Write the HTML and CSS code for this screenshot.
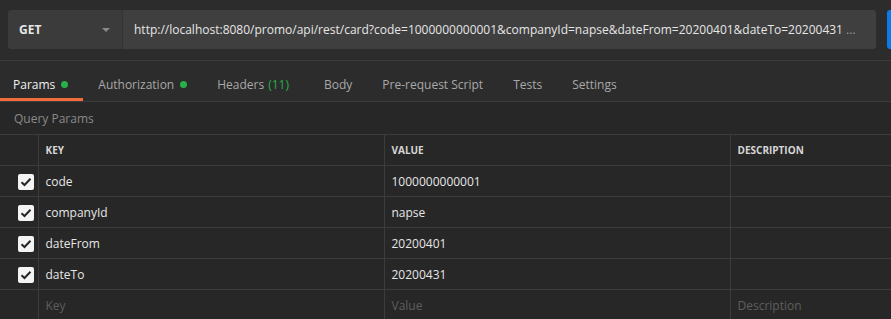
FILE: index.html
```html
<!DOCTYPE html>
<html lang="en">
<head>
    <meta charset="UTF-8">
    <title>Request</title>
    <link rel="stylesheet" href="styles.css">
</head>
<body>
    <div class="request-bar">
        <div class="method">
            <span>GET</span>
            <span class="caret"></span>
        </div>
        <div class="url">http://localhost:8080/promo/api/rest/card?code=1000000000001&amp;companyId=napse&amp;dateFrom=20200401&amp;dateTo=20200431 <span class="more">...</span></div>
        <button class="send" aria-label="Send"></button>
    </div>

    <div class="tabs">
        <div class="tab active">Params <span class="dot"></span></div>
        <div class="tab">Authorization <span class="dot"></span></div>
        <div class="tab headers">Headers <span class="count">(11)</span></div>
        <div class="tab">Body</div>
        <div class="tab">Pre-request Script</div>
        <div class="tab">Tests</div>
        <div class="tab">Settings</div>
    </div>

    <div class="params">
        <div class="section-title">Query Params</div>
        <table class="grid">
            <tr class="head">
                <th class="check-col"></th>
                <th class="key-col">KEY</th>
                <th class="value-col">VALUE</th>
                <th>DESCRIPTION</th>
            </tr>
            <tr>
                <td class="check-col"><span class="checkbox"><svg width="12" height="10" viewBox="0 0 12 10"><path d="M1.5 5.2 L4.5 8 L10.5 1.8" fill="none" stroke="#262626" stroke-width="2"/></svg></span></td>
                <td>code</td>
                <td>1000000000001</td>
                <td></td>
            </tr>
            <tr>
                <td class="check-col"><span class="checkbox"><svg width="12" height="10" viewBox="0 0 12 10"><path d="M1.5 5.2 L4.5 8 L10.5 1.8" fill="none" stroke="#262626" stroke-width="2"/></svg></span></td>
                <td>companyId</td>
                <td>napse</td>
                <td></td>
            </tr>
            <tr>
                <td class="check-col"><span class="checkbox"><svg width="12" height="10" viewBox="0 0 12 10"><path d="M1.5 5.2 L4.5 8 L10.5 1.8" fill="none" stroke="#262626" stroke-width="2"/></svg></span></td>
                <td>dateFrom</td>
                <td>20200401</td>
                <td></td>
            </tr>
            <tr>
                <td class="check-col"><span class="checkbox"><svg width="12" height="10" viewBox="0 0 12 10"><path d="M1.5 5.2 L4.5 8 L10.5 1.8" fill="none" stroke="#262626" stroke-width="2"/></svg></span></td>
                <td>dateTo</td>
                <td>20200431</td>
                <td></td>
            </tr>
            <tr class="placeholder">
                <td class="check-col"></td>
                <td>Key</td>
                <td>Value</td>
                <td>Description</td>
            </tr>
        </table>
    </div>
</body>
</html>
```

FILE: styles.css
```css
html, body {
    overflow: hidden;
}
body {
    margin: 0;
    width: 891px;
    height: 319px;
    background-color: #2c2c2c;
    font-family: 'Open Sans', sans-serif;
    font-size: 12px;
    color: #e6e6e6;
}
.request-bar {
    display: flex;
    height: 39px;
    padding: 10px 0 11px 8px;
    border-bottom: 1px solid #3c3c3c;
}
.method {
    width: 115px;
    box-sizing: border-box;
    display: flex;
    align-items: center;
    justify-content: space-between;
    padding: 0 12px 0 11px;
    background-color: #3b3b3b;
    border-radius: 3px 0 0 3px;
    border-right: 1px solid #333;
    font-weight: bold;
    color: #e6e6e6;
}
.caret {
    width: 0;
    height: 0;
    border-left: 4px solid transparent;
    border-right: 4px solid transparent;
    border-top: 4px solid #8a8a8a;
}
.url {
    width: 753px;
    box-sizing: border-box;
    display: flex;
    align-items: center;
    padding-left: 11px;
    background-color: #3f3f3f;
    border-radius: 0 3px 3px 0;
    white-space: pre;
    overflow: hidden;
    color: #e6e6e6;
}
.url .more {
    color: #9a9a9a;
}
.send {
    flex: 1;
    margin-left: 11px;
    padding: 0;
    border: none;
    border-radius: 3px 0 0 3px;
    background-color: #097bed;
}
.tabs {
    display: flex;
    height: 40px;
    border-bottom: 1px solid #3c3c3c;
}
.tab {
    height: 40px;
    box-sizing: border-box;
    display: flex;
    align-items: center;
    padding: 9px 15px 0 15px;
    border-bottom: 3px solid transparent;
    color: #a8a8a8;
}
.tab.active {
    padding-left: 13px;
    color: #f0f0f0;
    border-bottom-color: #f26b3a;
}
.tab.headers {
    padding-right: 20px;
}
.dot {
    width: 7px;
    height: 7px;
    border-radius: 50%;
    background-color: #26b14b;
    margin-left: 6px;
}
.count {
    color: #26b14b;
    margin-left: 4px;
}
.section-title {
    height: 32px;
    line-height: 33px;
    padding-left: 14px;
    color: #8a8a8a;
    background-color: #272727;
}
.grid {
    border-collapse: collapse;
    width: 891px;
    table-layout: fixed;
    background-color: #272727;
}
.grid th, .grid td {
    height: 30px;
    padding: 0 0 0 7px;
    border-top: 1px solid #3c3c3c;
    border-left: 1px solid #3c3c3c;
    text-align: left;
    white-space: nowrap;
}
.grid th {
    font-size: 10px;
    font-weight: bold;
    color: #d6d6d6;
}
.grid .check-col {
    width: 38px;
    border-left: none;
    padding: 0 4px 0 0;
    box-sizing: border-box;
    text-align: right;
}
.grid .key-col, .grid .value-col {
    width: 346px;
    box-sizing: border-box;
}
.checkbox {
    display: inline-flex;
    align-items: center;
    justify-content: center;
    width: 16px;
    height: 16px;
    border-radius: 2px;
    background-color: #f4f4f4;
    vertical-align: middle;
}
.placeholder td {
    color: #5e5e5e;
}
```
